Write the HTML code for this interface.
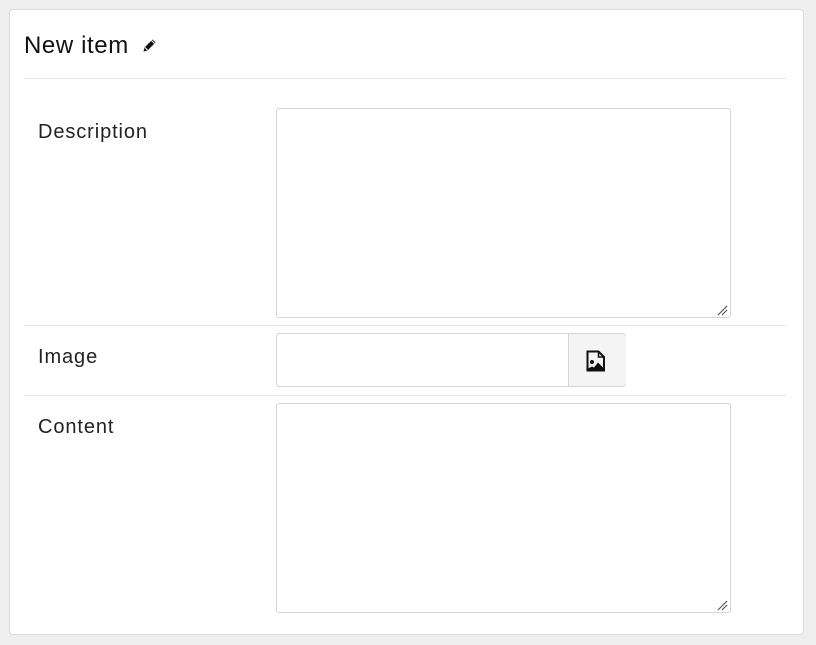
<!DOCTYPE html>
<html><head><style>
body{margin:0;width:816px;height:645px;background:#efefef;font-family:"Liberation Sans",sans-serif;position:relative;overflow:hidden}
.card{position:absolute;left:9px;top:9px;width:793px;height:624px;background:#fff;border:1px solid #dcdcdc;border-radius:4px}
.a{position:absolute}
.h{left:24px;top:32px;font-size:24px;color:#111;letter-spacing:0.6px}
.l{font-size:20px;color:#222;left:38px;letter-spacing:0.9px}
.line{left:24px;width:763px;height:1px;background:#eaeaea}
.ta{border:1px solid #d6d6d6;border-radius:3px;background:#fff;box-sizing:border-box}
</style></head><body>
<div class="card"></div>
<div class="a h">New item</div>
<svg class="a" style="left:142px;top:37px" width="16" height="16" viewBox="0 0 16 16"><path d="M1.5 14.5l1-4 8-8 3 3-8 8z" fill="#111"/><path d="M3 10.5l2.5 2.5M9.5 3.5l3 3" stroke="#fff" stroke-width="1"/></svg>
<div class="a line" style="top:78px"></div>
<div class="a l" style="top:121px">Description</div>
<div class="a ta" style="left:276px;top:108px;width:455px;height:210px"></div>
<svg class="a" style="left:716px;top:304px" width="12" height="12"><path d="M2 11L11 2M6 11L11 6" stroke="#555" stroke-width="1.2"/></svg>
<div class="a line" style="top:325px"></div>
<div class="a l" style="top:346px">Image</div>
<div class="a ta" style="left:276px;top:333px;width:350px;height:54px"></div>
<div class="a" style="left:568px;top:334px;width:57px;height:52px;background:#f4f4f4;border-left:1px solid #d6d6d6;border-radius:0 3px 3px 0"></div>
<svg class="a" style="left:586px;top:350px" width="20" height="22" viewBox="0 0 20 22"><path d="M1.5 1.5h11l5.5 5.5v13.5h-16.5z" fill="none" stroke="#111" stroke-width="2"/><path d="M12.5 1.5v5.5h5.5" fill="none" stroke="#111" stroke-width="1.5"/><circle cx="6" cy="12" r="2" fill="#111"/><path d="M2 20.5v-2l4 -2 2 1 4-5 6 6v2z" fill="#111"/></svg>
<div class="a line" style="top:395px"></div>
<div class="a l" style="top:416px">Content</div>
<div class="a ta" style="left:276px;top:403px;width:455px;height:210px"></div>
<svg class="a" style="left:716px;top:599px" width="12" height="12"><path d="M2 11L11 2M6 11L11 6" stroke="#555" stroke-width="1.2"/></svg>
</body></html>
